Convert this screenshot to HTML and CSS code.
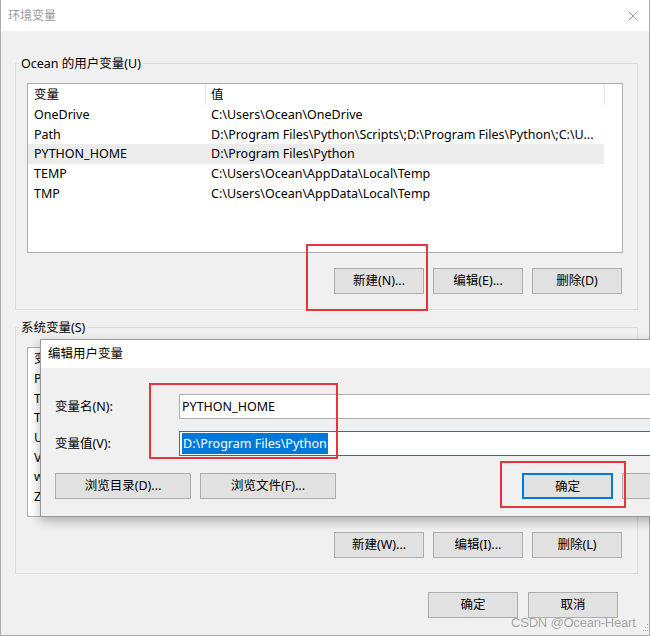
FILE: index.html
```html
<!DOCTYPE html>
<html lang="zh-CN">
<head>
<meta charset="utf-8">
<title>环境变量</title>
<link rel="stylesheet" href="styles.css">
</head>
<body>
<div class="window">
  <div class="titlebar">
    <span class="title">环境变量</span>
    <svg class="close" width="10" height="10" viewBox="0 0 10 10"><path d="M0.5 0.5L9.5 9.5M9.5 0.5L0.5 9.5" stroke="#9a9a9a" stroke-width="1" fill="none"/></svg>
  </div>
  <div class="content">
    <section class="group">
      <div class="group-title">Ocean 的用户变量(U)</div>
      <div class="list">
        <div class="list-head">
          <div class="hcell hname">变量</div>
          <div class="hcell hvalue">值</div>
        </div>
        <div class="row"><div class="cell">OneDrive</div><div class="cell">C:\Users\Ocean\OneDrive</div></div>
        <div class="row"><div class="cell">Path</div><div class="cell">D:\Program Files\Python\Scripts\;D:\Program Files\Python\;C:\U...</div></div>
        <div class="row sel-row"><div class="cell">PYTHON_HOME</div><div class="cell">D:\Program Files\Python</div></div>
        <div class="row"><div class="cell">TEMP</div><div class="cell">C:\Users\Ocean\AppData\Local\Temp</div></div>
        <div class="row"><div class="cell">TMP</div><div class="cell">C:\Users\Ocean\AppData\Local\Temp</div></div>
      </div>
      <div class="btn-row">
        <button class="btn">新建(N)...</button>
        <button class="btn">编辑(E)...</button>
        <button class="btn">删除(D)</button>
      </div>
    </section>
    <section class="group">
      <div class="group-title">系统变量(S)</div>
      <div class="list">
        <div class="list-head">
          <div class="hcell hname">变量</div>
          <div class="hcell hvalue">值</div>
        </div>
        <div class="row"><div class="cell">PSModulePath</div><div class="cell">%ProgramFiles%\WindowsPowerShell\Modules</div></div>
        <div class="row"><div class="cell">TEMP</div><div class="cell">C:\WINDOWS\TEMP</div></div>
        <div class="row"><div class="cell">TMP</div><div class="cell">C:\WINDOWS\TEMP</div></div>
        <div class="row"><div class="cell">USERNAME</div><div class="cell">SYSTEM</div></div>
        <div class="row"><div class="cell">VBOX_MSI_INSTALL_PATH</div><div class="cell">C:\Program Files\Oracle\VirtualBox\</div></div>
        <div class="row"><div class="cell">windir</div><div class="cell">%SystemRoot%</div></div>
        <div class="row"><div class="cell">ZES_ENABLE_SYSMAN</div><div class="cell">1</div></div>
      </div>
      <div class="btn-row">
        <button class="btn">新建(W)...</button>
        <button class="btn">编辑(I)...</button>
        <button class="btn">删除(L)</button>
      </div>
    </section>
    <div class="footer">
      <button class="btn">确定</button>
      <button class="btn">取消</button>
    </div>
  </div>

  <div class="dialog">
    <div class="dlg-title">编辑用户变量</div>
    <div class="dlg-body">
      <div class="field">
        <label class="field-label">变量名(N):</label>
        <div class="input">PYTHON_HOME</div>
      </div>
      <div class="field">
        <label class="field-label">变量值(V):</label>
        <div class="input focus"><span class="selected">D:\Program Files\Python</span></div>
      </div>
      <div class="dlg-btns">
        <button class="btn wide">浏览目录(D)...</button>
        <button class="btn wide">浏览文件(F)...</button>
        <button class="btn default">确定</button>
        <button class="btn">取消</button>
      </div>
    </div>
  </div>

  <div class="mark mark-new"></div>
  <div class="mark mark-fields"></div>
  <div class="mark mark-ok"></div>

  <div class="watermark">CSDN @Ocean-Heart</div>
  <svg class="grip" width="6" height="8" viewBox="0 0 6 8"><g fill="#b0b0b0"><rect x="4" y="0" width="1" height="1"/><rect x="2" y="3" width="1" height="1"/><rect x="4" y="3" width="1" height="1"/><rect x="0" y="6" width="1" height="1"/><rect x="2" y="6" width="1" height="1"/><rect x="4" y="6" width="1" height="1"/></g></svg>
</div>
</body>
</html>
```

FILE: styles.css
```css
* {
  box-sizing: border-box;
}

html,
body {
  margin: 0;
  padding: 0;
  overflow: hidden;
}

body {
  width: 650px;
  height: 636px;
  background: #ffffff;
  font-family: "Noto Sans", "Noto Sans CJK SC", sans-serif;
  font-size: 12.5px;
  color: #000000;
}

.window {
  position: relative;
  width: 650px;
  height: 636px;
  background: #f0f0f0;
  border-left: 1px solid #a9a9a9;
  border-right: 1px solid #a9a9a9;
  border-bottom: 1px solid #a9a9a9;
}

.titlebar {
  height: 31px;
  background: #ffffff;
  display: flex;
  align-items: center;
  justify-content: space-between;
  padding: 0 11px 0 7px;
}

.title {
  color: #9a9a9a;
  font-size: 12px;
  line-height: 16px;
}

.close {
  display: block;
}

.content {
  padding: 0 11px 0 14px;
}

.group {
  border: 1px solid #dcdcdc;
  padding: 0 14px 15px 11px;
  margin-top: 32px;
}

.group + .group {
  margin-top: 17px;
}

.group-title {
  width: max-content;
  margin: -8px 0 0 -8px;
  padding: 0 2px;
  background: #f0f0f0;
  line-height: 16px;
}

.list {
  margin-top: 11px;
  height: 170px;
  border: 1px solid #adadad;
  background: #ffffff;
  overflow: hidden;
}

.list-head {
  display: flex;
  height: 21px;
  line-height: 22px;
}

.hcell {
  padding-left: 6px;
  border-right: 1px solid #e5e5e5;
}

.hname {
  width: 178px;
}

.hvalue {
  width: 399px;
  padding-left: 5px;
}

.row {
  display: grid;
  grid-template-columns: 177px 399px;
  width: 576px;
  height: 19.7px;
  line-height: 20.5px;
}

.sel-row {
  background: #ececec;
}

.cell {
  padding-left: 6px;
  white-space: nowrap;
  overflow: hidden;
}

.btn-row {
  display: flex;
  justify-content: flex-end;
  gap: 9px;
  margin-top: 15px;
  margin-right: 1px;
}

.btn {
  width: 90px;
  height: 26px;
  padding: 0;
  border: 1px solid #adadad;
  background: #e1e1e1;
  font: inherit;
  color: #000000;
  line-height: 24px;
}

.footer {
  display: flex;
  justify-content: flex-end;
  gap: 10px;
  margin-top: 18px;
  padding-right: 20px;
}

.dialog {
  position: absolute;
  left: 39px;
  top: 339px;
  width: 687px;
  height: 178px;
  background: #f0f0f0;
  border: 1px solid #9a9a9a;
  box-shadow: 0 4px 10px rgba(0, 0, 0, 0.28);
}

.dlg-title {
  height: 28px;
  line-height: 28px;
  background: #ffffff;
  padding-left: 7px;
}

.dlg-body {
  padding: 26px 14px 0 14px;
}

.field {
  display: grid;
  grid-template-columns: 124px 1fr;
  align-items: center;
  height: 25px;
}

.field + .field {
  margin-top: 12px;
}

.field-label {
  line-height: 16px;
}

.input {
  height: 25px;
  border: 1px solid #adadad;
  background: #ffffff;
  padding-left: 2px;
  line-height: 23px;
  white-space: nowrap;
}

.input.focus {
  border-color: #0078d7;
}

.selected {
  display: inline-block;
  background: #0078d7;
  color: #ffffff;
  line-height: 21px;
  padding: 0 1px;
  vertical-align: top;
  margin-top: 1px;
}

.dlg-btns {
  display: flex;
  gap: 9px;
  margin-top: 17px;
}

.btn.wide {
  width: 136px;
}

.btn.default {
  margin-left: auto;
  width: 91px;
  border: 2px solid #0078d7;
}

.mark {
  position: absolute;
  border: 2px solid #e8333a;
}

.mark-new {
  left: 305px;
  top: 244px;
  width: 122px;
  height: 67px;
}

.mark-fields {
  left: 148px;
  top: 383px;
  width: 189px;
  height: 76px;
}

.mark-ok {
  left: 499px;
  top: 461px;
  width: 126px;
  height: 47px;
}

.watermark {
  position: absolute;
  left: 510px;
  top: 614px;
  font-family: "Liberation Sans", sans-serif;
  font-size: 13px;
  letter-spacing: -0.2px;
  line-height: 18px;
  color: #a3a3a3;
  text-shadow: 0 0 1px #ffffff;
}

.grip {
  position: absolute;
  left: 642px;
  top: 624px;
}
```
